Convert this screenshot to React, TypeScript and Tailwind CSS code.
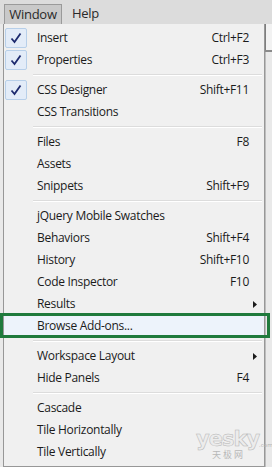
type Item =
  | { kind: 'sep' }
  | { kind: 'item'; label: string; shortcut?: string; checked?: boolean; submenu?: boolean; active?: boolean };

const itens: Item[] = [
  { kind: 'item', label: 'Insert', shortcut: 'Ctrl+F2', checked: true },
  { kind: 'item', label: 'Properties', shortcut: 'Ctrl+F3', checked: true },
  { kind: 'sep' },
  { kind: 'item', label: 'CSS Designer', shortcut: 'Shift+F11', checked: true },
  { kind: 'item', label: 'CSS Transitions' },
  { kind: 'sep' },
  { kind: 'item', label: 'Files', shortcut: 'F8' },
  { kind: 'item', label: 'Assets' },
  { kind: 'item', label: 'Snippets', shortcut: 'Shift+F9' },
  { kind: 'sep' },
  { kind: 'item', label: 'jQuery Mobile Swatches' },
  { kind: 'item', label: 'Behaviors', shortcut: 'Shift+F4' },
  { kind: 'item', label: 'History', shortcut: 'Shift+F10' },
  { kind: 'item', label: 'Code Inspector', shortcut: 'F10' },
  { kind: 'item', label: 'Results', submenu: true },
  { kind: 'item', label: 'Browse Add-ons...', active: true },
  { kind: 'sep' },
  { kind: 'item', label: 'Workspace Layout', submenu: true },
  { kind: 'item', label: 'Hide Panels', shortcut: 'F4' },
  { kind: 'sep' },
  { kind: 'item', label: 'Cascade' },
  { kind: 'item', label: 'Tile Horizontally' },
  { kind: 'item', label: 'Tile Vertically' },
];

const fonte = { fontFamily: '"Open Sans", "Noto Sans", sans-serif' };

export default function App() {
  return (
    <div
      className="relative h-[467px] w-[272px] overflow-hidden bg-[#e9e9e9] text-[12px] tracking-[-0.3px] text-[#1b1b1b]"
      style={fonte}
    >
      {/* barra de menus */}
      <div className="flex h-[24px] items-end bg-[#dcdcdc] pl-[4px]">
        <div className="flex h-[20px] w-[58px] items-center justify-center border border-b-0 border-[#9a9a9a] bg-[#c9c9c9] text-[13px] text-[#2a2a2a]">
          Window
        </div>
        <div className="flex h-[20px] items-center pl-[10px] text-[13px] text-[#2a2a2a]">Help</div>
      </div>

      {/* fundo à direita */}
      <div className="absolute right-0 top-[24px] h-[26px] w-[7px] border-l border-[#7d7d7d] bg-[#f2f2f2]" />
      <div className="absolute right-0 top-[50px] h-[2px] w-[7px] bg-[#8a8a8a]" />

      <div className="ml-[3px] w-[262px] border border-t-0 border-[#979797] bg-[#f0f0f0] pb-[3px] pt-[3px] shadow-[1px_1px_0_#bdbdbd]">
        {itens.map((item, i) =>
          item.kind === 'sep' ? (
            <div key={i} className="flex h-[8px] items-center pl-[29px] pr-[2px]">
              <div className="h-[2px] w-full border-t border-b border-t-[#dcdcdc] border-b-white" />
            </div>
          ) : (
            <Linha key={i} {...item} />
          ),
        )}
      </div>

      {/* destaque verde */}
      <div className="absolute left-0 top-[313px] h-[25px] w-[270px] border-[3px] border-[#1f7a3c]" />

      {/* marca d'água */}
      <div className="absolute left-[196px] top-[429px] leading-none">
        <div className="flex items-end">
          <span
            className="text-[21px] font-bold tracking-[-1px]"
            style={{ fontFamily: '"DejaVu Sans", sans-serif', WebkitTextStroke: '0.5px #b5b5b5', color: '#ececec' }}
          >
            yesky
          </span>
          <span className="pb-[2px] text-[6px] tracking-normal text-[#b0b0b0]">.com</span>
        </div>
        <div
          className="pl-[16px] text-[9px] tracking-[2px] text-[#b8b8b8]"
          style={{ fontFamily: '"Noto Sans CJK SC", sans-serif' }}
        >
          天极网
        </div>
      </div>
    </div>
  );
}

function Linha({
  label,
  shortcut,
  checked,
  submenu,
  active,
}: {
  label: string;
  shortcut?: string;
  checked?: boolean;
  submenu?: boolean;
  active?: boolean;
}) {
  return (
    <div className={`flex h-[22px] items-center ${active ? 'bg-[#edf3fb]' : ''}`}>
      <div className="flex w-[33px] shrink-0 items-center pl-[1px]">
        {checked && (
          <div className="flex h-[20px] w-[22px] items-center justify-center rounded-[2px] border border-[#b7cfe9] bg-[#e3ecf8]">
            <svg width="12" height="12" viewBox="0 0 12 12">
              <path d="M1.5 6.5 L4.5 10 L10.5 1.5" fill="none" stroke="#1d2a6e" strokeWidth="1.8" />
            </svg>
          </div>
        )}
      </div>
      <span className="flex-1 whitespace-nowrap">{label}</span>
      {shortcut && <span className="pr-[15px]">{shortcut}</span>}
      {submenu && (
        <svg className="mr-[7px]" width="4" height="7" viewBox="0 0 4 7">
          <path d="M0 0 L4 3.5 L0 7 Z" fill="#1b1b1b" />
        </svg>
      )}
    </div>
  );
}
